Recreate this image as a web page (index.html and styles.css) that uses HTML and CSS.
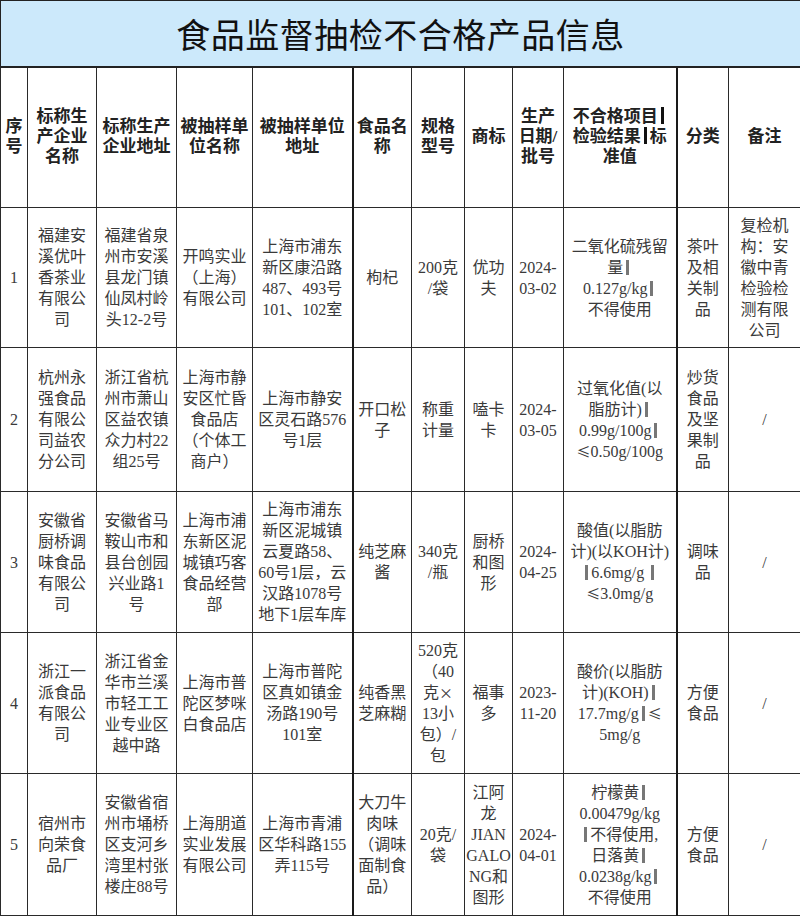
FILE: index.html
```html
<!DOCTYPE html>
<html lang="zh-CN">
<head>
<meta charset="utf-8">
<title>食品监督抽检不合格产品信息</title>
<link rel="stylesheet" href="styles.css">
</head>
<body>
<table class="sheet">
  <colgroup>
    <col class="c1"><col class="c2"><col class="c3"><col class="c4"><col class="c5"><col class="c6">
    <col class="c7"><col class="c8"><col class="c9"><col class="c10"><col class="c11"><col class="c12">
  </colgroup>
  <tr class="title-row"><td colspan="12" class="title">食品监督抽检不合格产品信息</td></tr>
  <tr class="head">
    <th>序<br>号</th>
    <th>标称生<br>产企业<br>名称</th>
    <th>标称生产<br>企业地址</th>
    <th>被抽样单<br>位名称</th>
    <th class="thick">被抽样单位<br>地址</th>
    <th>食品名<br>称</th>
    <th>规格<br>型号</th>
    <th>商标</th>
    <th>生产<br>日期/<br>批号</th>
    <th class="thick">不合格项目<span class="bar hbar"></span><br>检验结果<span class="bar hbar"></span>标<br>准值</th>
    <th>分类</th>
    <th>备注</th>
  </tr>
  <tr class="r1">
    <td>1</td>
    <td>福建安<br>溪优叶<br>香茶业<br>有限公<br>司</td>
    <td>福建省泉<br>州市安溪<br>县龙门镇<br>仙凤村岭<br>头12-2号</td>
    <td>开鸣实业<br>（上海）<br>有限公司</td>
    <td class="thick">上海市浦东<br>新区康沿路<br>487、493号<br>101、102室</td>
    <td>枸杞</td>
    <td>200克<br>/袋</td>
    <td>优功<br>夫</td>
    <td>2024-<br>03-02</td>
    <td class="thick">二氧化硫残留<br>量<span class="bar"></span><br>0.127g/kg<span class="bar"></span><br>不得使用</td>
    <td>茶叶<br>及相<br>关制<br>品</td>
    <td>复检机<br>构：安<br>徽中青<br>检验检<br>测有限<br>公司</td>
  </tr>
  <tr class="r2">
    <td>2</td>
    <td>杭州永<br>强食品<br>有限公<br>司益农<br>分公司</td>
    <td>浙江省杭<br>州市萧山<br>区益农镇<br>众力村22<br>组25号</td>
    <td>上海市静<br>安区忙昏<br>食品店<br>（个体工<br>商户）</td>
    <td class="thick">上海市静安<br>区灵石路576<br>号1层</td>
    <td>开口松<br>子</td>
    <td>称重<br>计量</td>
    <td>嗑卡<br>卡</td>
    <td>2024-<br>03-05</td>
    <td class="thick">过氧化值(以<br>脂肪计)<span class="bar"></span><br>0.99g/100g<span class="bar"></span><br><span class="cjk">≤</span>0.50g/100g</td>
    <td>炒货<br>食品<br>及坚<br>果制<br>品</td>
    <td class="slash">/</td>
  </tr>
  <tr class="r3">
    <td>3</td>
    <td>安徽省<br>厨桥调<br>味食品<br>有限公<br>司</td>
    <td>安徽省马<br>鞍山市和<br>县台创园<br>兴业路1<br>号</td>
    <td>上海市浦<br>东新区泥<br>城镇巧客<br>食品经营<br>部</td>
    <td class="thick">上海市浦东<br>新区泥城镇<br>云夏路58、<br>60号1层，云<br>汉路1078号<br>地下1层车库</td>
    <td>纯芝麻<br>酱</td>
    <td>340克<br>/瓶</td>
    <td>厨桥<br>和图<br>形</td>
    <td>2024-<br>04-25</td>
    <td class="thick">酸值(以脂肪<br>计)(以KOH计)<br><span class="bar"></span>6.6mg/g <span class="bar"></span><br><span class="cjk">≤</span>3.0mg/g</td>
    <td>调味<br>品</td>
    <td class="slash">/</td>
  </tr>
  <tr class="r4">
    <td class="num4">4</td>
    <td>浙江一<br>派食品<br>有限公<br>司</td>
    <td>浙江省金<br>华市兰溪<br>市轻工工<br>业专业区<br>越中路</td>
    <td>上海市普<br>陀区梦咪<br>白食品店</td>
    <td class="thick">上海市普陀<br>区真如镇金<br>汤路190号<br>101室</td>
    <td>纯香黑<br>芝麻糊</td>
    <td>520克<br>（40<br>克<span class="cjk">×</span><br>13小<br>包）/<br>包</td>
    <td>福事<br>多</td>
    <td>2023-<br>11-20</td>
    <td class="thick">酸价(以脂肪<br>计)(KOH)<span class="bar"></span><br>17.7mg/g<span class="bar"></span><span class="cjk">≤</span><br>5mg/g</td>
    <td>方便<br>食品</td>
    <td class="slash">/</td>
  </tr>
  <tr class="r5">
    <td>5</td>
    <td>宿州市<br>向荣食<br>品厂</td>
    <td>安徽省宿<br>州市埇桥<br>区支河乡<br>湾里村张<br>楼庄88号</td>
    <td>上海朋道<br>实业发展<br>有限公司</td>
    <td class="thick">上海市青浦<br>区华科路155<br>弄115号</td>
    <td>大刀牛<br>肉味<br>（调味<br>面制食<br>品）</td>
    <td>20克/<br>袋</td>
    <td class="narrow">江阿<br>龙<br>JIAN<br>GALO<br>NG和<br>图形</td>
    <td>2024-<br>04-01</td>
    <td class="thick">柠檬黄<span class="bar"></span><br>0.00479g/kg<br><span class="bar"></span>不得使用,<br>日落黄<span class="bar"></span><br>0.0238g/kg<span class="bar"></span><br>不得使用</td>
    <td>方便<br>食品</td>
    <td class="slash">/</td>
  </tr>
</table>
</body>
</html>
```

FILE: styles.css
```css
html, body {
  margin: 0;
  padding: 0;
  background: #ffffff;
}

.sheet {
  width: 800px;
  table-layout: fixed;
  border-collapse: collapse;
  font-family: "Liberation Serif", "Noto Sans CJK SC", serif;
  color: #333333;
}

.c1 { width: 27px; }
.c2 { width: 69px; }
.c3 { width: 80px; }
.c4 { width: 76px; }
.c5 { width: 100px; }
.c6 { width: 59px; }
.c7 { width: 53px; }
.c8 { width: 48px; }
.c9 { width: 51px; }
.c10 { width: 113px; }
.c11 { width: 52px; }
.c12 { width: 72px; }

.sheet td,
.sheet th {
  border: 1px solid #2a2a2a;
  padding: 0 1px;
  text-align: center;
  vertical-align: middle;
  white-space: nowrap;
  overflow: hidden;
}

.sheet .thick {
  border-right: 2px solid #1a1a1a;
}

.title-row { height: 66px; }

.sheet .title {
  background: #cce9fb;
  color: #111111;
  font-size: 34px;
  font-weight: 400;
  letter-spacing: 0.5px;
  border: 1px solid #222222;
  border-bottom: 2px solid #222222;
}

.head { height: 141px; }

.head th {
  font-size: 17px;
  font-weight: 700;
  line-height: 20px;
  color: #222222;
}

.r1 { height: 140px; }
.r2 { height: 144px; }
.r3 { height: 141px; }
.r4 { height: 141px; }
.r5 { height: 142px; }

.sheet tr[class^="r"] td {
  font-size: 16px;
  line-height: 21px;
  color: #3a3a3a;
}

.sheet .r5 td { line-height: 21.5px; }

.sheet .narrow {
  font-size: 15px;
}

.sheet .num4 { color: #8a6a3a; }

.sheet .slash {
  color: #666666;
  font-size: 17px;
}

.cjk {
  font-family: "Noto Sans CJK SC", sans-serif;
  font-size: 14px;
  line-height: 1;
}

.bar {
  display: inline-block;
  width: 3px;
  height: 15px;
  background: #777777;
  vertical-align: -2px;
  margin: 0 3px;
}

.hbar {
  background: #111111;
  height: 17px;
  width: 3px;
}
```
